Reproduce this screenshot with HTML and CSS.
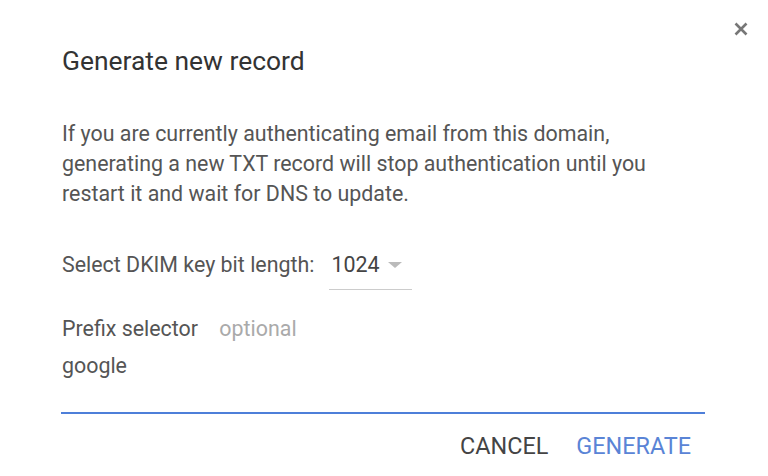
FILE: index.html
```html
<!DOCTYPE html>
<html>
<head>
<meta charset="utf-8">
<link rel="stylesheet" href="styles.css">
</head>
<body>
<div class="dialog">
  <button class="close" aria-label="Close">
    <svg width="14" height="14" viewBox="0 0 14 14"><path d="M1.5 1.5 L12.5 12.5 M12.5 1.5 L1.5 12.5" stroke="#777" stroke-width="2.6" stroke-linecap="butt"/></svg>
  </button>
  <h1 class="title">Generate new record</h1>
  <p class="desc">If you are currently authenticating email from this domain, generating a new TXT record will stop authentication until you restart it and wait for DNS to update.</p>
  <div class="key-row">
    <span class="key-label">Select DKIM key bit length:</span>
    <div class="select">
      <span class="select-value">1024</span>
      <span class="caret"></span>
    </div>
  </div>
  <div class="field">
    <div class="field-label">Prefix selector <span class="optional">optional</span></div>
    <div class="field-value">google</div>
    <div class="field-line"></div>
  </div>
  <div class="actions">
    <button class="btn cancel">CANCEL</button>
    <button class="btn primary">GENERATE</button>
  </div>
</div>
</body>
</html>
```
FILE: styles.css
```css
html, body {
  margin: 0;
  padding: 0;
  background: #fff;
}
body {
  font-family: Roboto, "Liberation Sans", Arial, sans-serif;
  color: #555;
  width: 768px;
  height: 476px;
  overflow: hidden;
}
.dialog {
  position: relative;
  padding: 45px 63px 0 62px;
}
.close {
  position: absolute;
  top: 22px;
  right: 20px;
  width: 14px;
  height: 14px;
  padding: 0;
  border: 0;
  background: none;
  display: flex;
}
.title {
  margin: 0;
  font-weight: 400;
  font-size: 26.4px;
  line-height: 32px;
  color: #333;
}
.desc {
  margin: 42px 0 0;
  font-size: 21.4px;
  line-height: 30px;
  color: #555;
  width: 620px;
}
.key-row {
  margin-top: 41px;
  display: flex;
  align-items: flex-start;
  font-size: 21.4px;
  line-height: 30px;
}
.key-label {
  color: #555;
}
.select {
  margin-left: 15px;
  width: 83px;
  height: 40px;
  border-bottom: 1px solid #ccc;
  display: flex;
  align-items: flex-start;
  box-sizing: border-box;
  padding-left: 2px;
}
.select-value {
  color: #444;
}
.caret {
  margin: 12px 0 0 8px;
  width: 0;
  height: 0;
  border-left: 7px solid transparent;
  border-right: 7px solid transparent;
  border-top: 6px solid #bbb;
}
.field {
  margin-top: 24px;
  font-size: 21.4px;
  line-height: 30px;
}
.field-label {
  color: #555;
}
.optional {
  color: #aaa;
  margin-left: 16px;
}
.field-value {
  margin-top: 7px;
  color: #555;
}
.field-line {
  margin-top: 31px;
  height: 2px;
  background: #4e7fd9;
  margin-left: -1px;
}
.actions {
  margin-top: 17px;
  display: flex;
  justify-content: flex-end;
  gap: 28px;
  padding-right: 14px;
}
.btn {
  border: 0;
  background: none;
  padding: 0;
  font-family: inherit;
  font-size: 23.4px;
  line-height: 30px;
  font-weight: 400;
}
.cancel { color: #444; }
.primary { color: #5a84d6; }
```
